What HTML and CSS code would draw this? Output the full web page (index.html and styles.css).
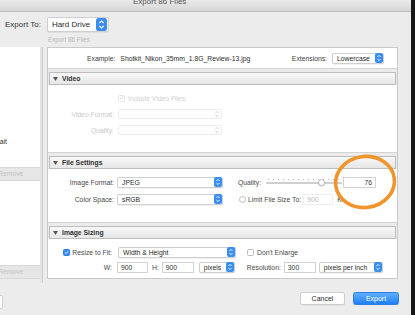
FILE: index.html
```html
<!DOCTYPE html>
<html>
<head>
<meta charset="utf-8">
<link rel="stylesheet" href="styles.css">
</head>
<body>
<div class="screen">
  <div class="window">
    <div class="titlebar"><span class="title">Export 86 Files</span></div>
    <div class="export-to">
      <span class="lbl-big">Export To:</span>
      <span class="popup big">Hard Drive
        <svg class="stp-big" viewBox="0 0 11 13" width="11" height="13"><rect width="11" height="13" rx="2.5" fill="#3a8df3"/><path d="M3.3 5.2 L5.5 3 L7.7 5.2 M3.3 7.8 L5.5 10 L7.7 7.8" stroke="#fff" stroke-width="1.1" fill="none"/></svg>
      </span>
    </div>
    <div class="subtitle">Export 86 Files</div>
    <div class="main">
      <div class="left">
        <div class="preset"><span class="cut">Portrait</span></div>
        <div class="remove"><span class="cut-r">Remove</span></div>
        <div class="preset2"></div>
        <div class="remove"><span class="cut-r">Remove</span></div>
      </div>
      <div class="split"></div>
      <div class="panel">
        <div class="example">
          <span class="lab-d">Example:</span><span class="val">Shotkit_Nikon_35mm_1.8G_Review-13.jpg</span>
          <span class="ext"><span class="lab-d">Extensions:</span>
            <span class="popup small lower">Lowercase
              <svg viewBox="0 0 8 10" width="8" height="10"><rect width="8" height="10" rx="2" fill="#3a8df3"/><path d="M2.4 4 L4 2.4 L5.6 4 M2.4 6 L4 7.6 L5.6 6" stroke="#fff" stroke-width="0.9" fill="none"/></svg>
            </span>
          </span>
        </div>

        <div class="sec-top"><div class="sec-head"><svg class="tri" viewBox="0 0 5 4" width="5" height="4"><path d="M0 0 H5 L2.5 4 Z" fill="#555"/></svg><span>Video</span></div></div>
        <div class="body video">
          <span></span>
          <span class="dis-check"><span class="cb dis">&#10003;</span>Include Video Files</span>
          <span class="lab dis-l">Video Format:</span>
          <span class="popup dis-pop"><span></span><svg viewBox="0 0 8 10" width="8" height="10"><path d="M2.4 4 L4 2.4 L5.6 4 M2.4 6 L4 7.6 L5.6 6" stroke="#c8c8c8" stroke-width="0.9" fill="none"/></svg></span>
          <span class="lab dis-l">Quality:</span>
          <span class="popup dis-pop"><span></span><svg viewBox="0 0 8 10" width="8" height="10"><path d="M2.4 4 L4 2.4 L5.6 4 M2.4 6 L4 7.6 L5.6 6" stroke="#c8c8c8" stroke-width="0.9" fill="none"/></svg></span>
        </div>

        <div class="sec-top"><div class="sec-head"><svg class="tri" viewBox="0 0 5 4" width="5" height="4"><path d="M0 0 H5 L2.5 4 Z" fill="#555"/></svg><span>File Settings</span></div></div>
        <div class="body file">
          <span class="lab">Image Format:</span>
          <span class="popup small">JPEG
            <svg viewBox="0 0 8 10" width="8" height="10"><rect width="8" height="10" rx="2" fill="#3a8df3"/><path d="M2.4 4 L4 2.4 L5.6 4 M2.4 6 L4 7.6 L5.6 6" stroke="#fff" stroke-width="0.9" fill="none"/></svg>
          </span>
          <span class="right">
            <span class="lab q">Quality:</span>
            <span class="slider"><span class="ticks"></span><span class="track"></span><span class="thumb"></span></span>
            <span class="field num">76</span>
          </span>
          <span class="lab">Color Space:</span>
          <span class="popup small">sRGB
            <svg viewBox="0 0 8 10" width="8" height="10"><rect width="8" height="10" rx="2" fill="#3a8df3"/><path d="M2.4 4 L4 2.4 L5.6 4 M2.4 6 L4 7.6 L5.6 6" stroke="#fff" stroke-width="0.9" fill="none"/></svg>
          </span>
          <span class="right">
            <span class="cb lim"></span>
            <span class="lab lim-t">Limit File Size To:</span>
            <span class="field dis-f">900</span>
            <span class="lab k">K</span>
          </span>
        </div>

        <div class="sec-top"><div class="sec-head"><svg class="tri" viewBox="0 0 5 4" width="5" height="4"><path d="M0 0 H5 L2.5 4 Z" fill="#555"/></svg><span>Image Sizing</span></div></div>
        <div class="body sizing">
          <div class="row">
            <span class="lab cell"><span class="cb on"><svg viewBox="0 0 7 7" width="7" height="7"><path d="M1.5 3.6 L3 5 L5.6 1.8" stroke="#fff" stroke-width="1.1" fill="none"/></svg></span>Resize to Fit:</span>
            <span class="popup small wh">Width &amp; Height
              <svg viewBox="0 0 8 10" width="8" height="10"><rect width="8" height="10" rx="2" fill="#3a8df3"/><path d="M2.4 4 L4 2.4 L5.6 4 M2.4 6 L4 7.6 L5.6 6" stroke="#fff" stroke-width="0.9" fill="none"/></svg>
            </span>
            <span class="cb enl"></span><span class="lab enl-t">Don't Enlarge</span>
          </div>
          <div class="row">
            <span class="lab cell">W:</span>
            <span class="field w">900</span>
            <span class="lab h">H:</span>
            <span class="field hf">900</span>
            <span class="popup small px">pixels
              <svg viewBox="0 0 8 10" width="8" height="10"><rect width="8" height="10" rx="2" fill="#3a8df3"/><path d="M2.4 4 L4 2.4 L5.6 4 M2.4 6 L4 7.6 L5.6 6" stroke="#fff" stroke-width="0.9" fill="none"/></svg>
            </span>
            <span class="lab res">Resolution:</span>
            <span class="field rf">300</span>
            <span class="popup small ppi">pixels per inch
              <svg viewBox="0 0 8 10" width="8" height="10"><rect width="8" height="10" rx="2" fill="#3a8df3"/><path d="M2.4 4 L4 2.4 L5.6 4 M2.4 6 L4 7.6 L5.6 6" stroke="#fff" stroke-width="0.9" fill="none"/></svg>
            </span>
          </div>
        </div>
      </div>
    </div>
    <div class="footer">
      <span class="plug"></span>
      <span class="btn cancel">Cancel</span>
      <span class="btn export">Export</span>
    </div>
  </div>
  <div class="edge"></div>
</div>
<svg class="annot" viewBox="0 0 68 60" width="68" height="60"><ellipse cx="34" cy="29" rx="29.5" ry="25.5" fill="none" stroke="#f0952b" stroke-width="3.6" transform="rotate(-8 34 29)"/></svg>
</body>
</html>
```

FILE: styles.css
```css
* { box-sizing: border-box; }
html, body { margin: 0; padding: 0; }
body {
  width: 415px; height: 315px; overflow: hidden; position: relative;
  font-family: "Liberation Sans", Arial, sans-serif; font-size: 6.8px;
  color: #3a3a3a; background: #ececec;
}
.screen { display: flex; width: 415px; height: 315px; }
.window { width: 411px; height: 315px; display: flex; flex-direction: column; background: #ececec; }
.edge { width: 4px; background: #161616; }

.titlebar { height: 12px; flex: none; background: linear-gradient(#e9e9e9, #d6d6d6); border-bottom: 1px solid #bcbcbc; overflow: hidden; }
.title { display: block; margin: -3px 0 0 133px; font-size: 8px; line-height: 10px; color: #555; }

.export-to { display: flex; align-items: center; height: 15px; margin-top: 5px; padding-left: 5px; gap: 6px; flex: none; }
.lbl-big { font-size: 8px; color: #333; }

.popup {
  display: flex; align-items: center; justify-content: space-between;
  background: #fff; border: 1px solid #cfcfcf; border-radius: 2px;
  box-shadow: 0 0.5px 0.5px rgba(0,0,0,0.1); color: #2a2a2a; white-space: nowrap;
}
.popup.big { width: 62px; height: 15px; font-size: 8px; padding: 0 1px 0 4px; }
.popup.small { height: 11px; padding: 0 0 0 4px; }
.popup.small svg { margin-right: 0; }
.popup.lower { width: 52px; }

.subtitle { height: 10px; line-height: 10px; margin-top: 3px; padding-left: 48px; font-size: 6.3px; color: #b8b8b8; flex: none; }

.main { display: flex; align-items: flex-start; height: 236px; margin-top: 2px; flex: none; }
.left { width: 40px; display: flex; flex-direction: column; }
.preset { background: #fff; height: 120px; padding-top: 91px; overflow: hidden; white-space: nowrap; }
.cut { display: inline-block; margin-left: -15px; color: #333; }
.preset2 { background: #fff; height: 84px; }
.remove { height: 14px; background: #e6e6e6; border-top: 1px solid #d8d8d8; border-bottom: 1px solid #d8d8d8; color: #c4c4c4; line-height: 12px; overflow: hidden; white-space: nowrap; }
.cut-r { display: inline-block; margin-left: -2px; }
.split { width: 3px; height: 236px; background: #e4e4e4; border-right: 1px solid #cdcdcd; border-radius: 0 0 2px 2px; }

.panel { margin-left: 4px; width: 351px; height: 232px; background: #fff; border: 1px solid #c9c9c9; display: flex; flex-direction: column; }

.example { height: 20px; flex: none; display: flex; align-items: center; padding: 0 13px 0 39px; color: #2e2e2e; }
.lab-d { color: #3d3d3d; }
.example .val { margin-left: 5px; }
.ext { margin-left: auto; display: flex; align-items: center; gap: 5px; }

.sec-top { flex: none; border-top: 1px solid #d3d3d3; background: #ebebeb; padding: 3px 1px 0; }
.sec-head {
  height: 13px; border: 1px solid #bdbdbd; background: linear-gradient(#f8f8f8, #e6e6e6);
  display: flex; align-items: center; padding-left: 3px; gap: 4px; font-weight: bold; color: #303030;
}
.tri { flex: none; }

.body { flex: none; }
.lab { color: #474747; white-space: nowrap; }
.video { height: 67px; padding-top: 7px; display: grid; grid-template-columns: 66px 104px; grid-auto-rows: 12px; column-gap: 4px; row-gap: 4px; align-items: center; }
.video .lab, .file > .lab { text-align: right; }
.dis-l { color: #c9c9c9; }
.dis-check { display: flex; align-items: center; gap: 3px; color: #cfcfcf; }
.cb { display: inline-flex; align-items: center; justify-content: center; width: 7px; height: 7px; border: 1px solid #bdbdbd; border-radius: 1.5px; background: #fff; flex: none; }
.cb.dis { border-color: #e4e4e4; color: #c9c9c9; font-size: 6px; line-height: 6px; }
.cb.on { background: #3a8df3; border-color: #2f7fe0; }
.dis-pop { height: 10px; border-color: #ececec; box-shadow: none; padding-left: 4px; }

.file { height: 53px; padding-top: 7px; display: grid; grid-template-columns: 66px 106px auto; grid-auto-rows: 12px; column-gap: 3px; row-gap: 5px; align-items: center; }
.right { display: flex; align-items: center; height: 12px; }
.q { margin-left: 12px; }
.slider { position: relative; width: 76px; height: 10px; margin-left: 5px; }
.ticks { position: absolute; left: 2px; right: 2px; top: 2px; height: 1px; background: repeating-linear-gradient(90deg, #b9b9b9 0 1px, transparent 1px 5px); }
.track { position: absolute; left: 0; right: 0; top: 5px; height: 2px; border-radius: 1px; background: #cfcfcf; }
.thumb { position: absolute; left: 52px; top: 2px; width: 7px; height: 7px; border-radius: 50%; background: #fff; border: 1px solid #bcbcbc; box-shadow: 0 0.5px 1px rgba(0,0,0,0.2); }
.field { display: flex; align-items: center; height: 11px; background: #fff; border: 1px solid #d2d2d2; padding: 0 3px; color: #333; }
.num { width: 33px; margin-left: 1px; justify-content: flex-end; }
.lim { margin-left: 13px; border-radius: 50%; }
.lim-t { margin-left: 2px; }
.dis-f { width: 30px; margin-left: 2px; border-color: #ededed; color: #bdbdbd; }
.k { margin-left: 4px; }

.sizing { height: 39px; padding-top: 7px; display: flex; flex-direction: column; gap: 3px; }
.row { display: flex; align-items: center; height: 12px; }
.cell { width: 66px; flex: none; display: flex; align-items: center; justify-content: flex-end; gap: 2px; padding-right: 2px; }
.wh { width: 118px; margin-left: 4px; }
.enl { margin-left: 11px; }
.enl-t { margin-left: 3px; }
.w { width: 31px; margin-left: 3px; }
.h { margin-left: 4px; }
.hf { width: 32px; margin-left: 3px; }
.px { width: 36px; margin-left: 5px; }
.res { margin-left: 12px; }
.rf { width: 32px; margin-left: 3px; }
.ppi { width: 64px; margin-left: 3px; }

.footer { flex: 1; display: flex; align-items: flex-start; padding: 9px 12px 0 0; }
.plug { width: 43px; height: 14px; margin: 3px 0 0 -40px; background: #fff; border: 1px solid #cfcfcf; border-radius: 2px; }
.btn { display: flex; align-items: center; justify-content: center; height: 13px; border-radius: 2.5px; font-size: 7px; }
.cancel { width: 45px; margin-left: auto; background: #fff; border: 1px solid #cdcdcd; color: #2a2a2a; box-shadow: 0 0.5px 0.5px rgba(0,0,0,0.1); }
.export { width: 46px; margin-left: 8px; background: linear-gradient(#5eaefb, #1f80f4); color: #fff; border: 1px solid #2a7fe6; }

.annot { position: absolute; left: 331px; top: 153px; }
```
